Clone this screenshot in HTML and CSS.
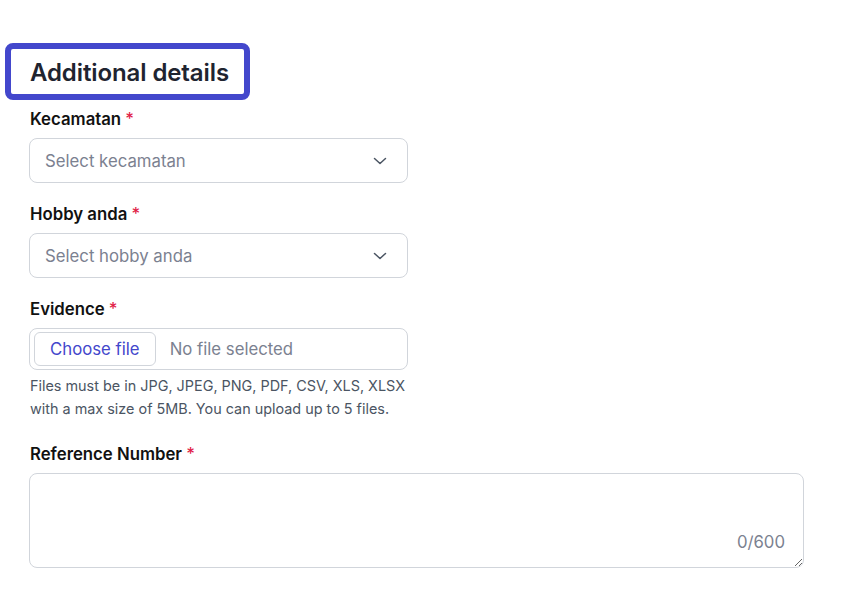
FILE: index.html
```html
<!DOCTYPE html>
<html lang="en">
<head>
<meta charset="utf-8">
<title>Additional details</title>
<link rel="stylesheet" href="styles.css">
</head>
<body>
<main class="page">
  <h2 class="section-title">Additional details</h2>

  <div class="field">
    <label class="label">Kecamatan <span class="req">*</span></label>
    <div class="select">
      <span class="placeholder">Select kecamatan</span>
      <svg class="chev" width="16" height="16" viewBox="0 0 16 16"><path d="M2.5 5.5 L8 10.5 L13.5 5.5" fill="none" stroke="#4b5563" stroke-width="1.5" stroke-linecap="round" stroke-linejoin="round"/></svg>
    </div>
  </div>

  <div class="field">
    <label class="label">Hobby anda <span class="req">*</span></label>
    <div class="select">
      <span class="placeholder">Select hobby anda</span>
      <svg class="chev" width="16" height="16" viewBox="0 0 16 16"><path d="M2.5 5.5 L8 10.5 L13.5 5.5" fill="none" stroke="#4b5563" stroke-width="1.5" stroke-linecap="round" stroke-linejoin="round"/></svg>
    </div>
  </div>

  <div class="field field-file">
    <label class="label">Evidence <span class="req">*</span></label>
    <div class="file">
      <span class="file-btn">Choose file</span>
      <span class="file-none">No file selected</span>
    </div>
    <p class="help">Files must be in JPG, JPEG, PNG, PDF, CSV, XLS, XLSX<br>with a max size of 5MB. You can upload up to 5 files.</p>
  </div>

  <div class="field field-wide">
    <label class="label">Reference Number <span class="req">*</span></label>
    <div class="textarea-wrap">
      <textarea class="textarea"></textarea>
      <span class="counter">0/600</span>
    </div>
  </div>
</main>
</body>
</html>
```

FILE: styles.css
```css
* { box-sizing: border-box; }
html, body { margin: 0; padding: 0; background: #fff; }
body {
  font-family: Inter, "Noto Sans", "Liberation Sans", sans-serif;
  color: #111827;
}
.page {
  padding: 49px 0 0 30px;
  width: 805px;
}
.section-title {
  display: inline-block;
  margin: 0 0 13px -19px;
  padding: 8px 15px 5px 19px;
  font-size: 24px;
  line-height: 32px;
  font-weight: 600;
  color: #1f2430;
  outline: 6px solid #4347cc;
  border-radius: 2px;
  letter-spacing: -0.1px;
}
.field { margin-bottom: 19px; width: 378px; }
.field-file .help { margin-bottom: 22px; }
.field-file { margin-bottom: 0; }
.field-wide { width: 775px; }
.label {
  display: block;
  font-size: 16.75px;
  line-height: 24px;
  font-weight: 600;
  color: #111;
  margin-bottom: 7px;
}
.req { color: #e11d48; font-weight: 500; }
.select {
  height: 45px;
  margin-left: -1px;
  border: 1px solid #d1d5db;
  border-radius: 8px;
  display: flex;
  align-items: center;
  justify-content: space-between;
  padding: 0 19px 0 15px;
}
.placeholder { font-size: 16.75px; color: #7b8190; }
.chev { display: block; }
.file {
  height: 42px;
  margin-left: -1px;
  border: 1px solid #d1d5db;
  border-radius: 8px;
  display: flex;
  align-items: center;
  padding: 0 4px;
  gap: 14px;
}
.file-btn {
  height: 34px;
  padding: 0 15px;
  border: 1px solid #d1d5db;
  border-radius: 6px;
  display: flex;
  align-items: center;
  font-size: 16.75px;
  color: #4347cc;
}
.file-none { font-size: 16.75px; color: #7b8190; }
.help {
  margin: 4px 0 0;
  font-size: 14.4px;
  line-height: 23px;
  color: #4b5563;
  white-space: nowrap;
}
.textarea-wrap { position: relative; margin-left: -1px; width: 775px; }
.textarea {
  display: block;
  width: 100%;
  height: 95px;
  border: 1px solid #d1d5db;
  border-radius: 8px;
  resize: vertical;
  font-family: inherit;
  font-size: 16px;
}
.counter {
  position: absolute;
  right: 19px;
  bottom: 16px;
  font-size: 16.75px;
  line-height: 20px;
  color: #7b8190;
}
```
